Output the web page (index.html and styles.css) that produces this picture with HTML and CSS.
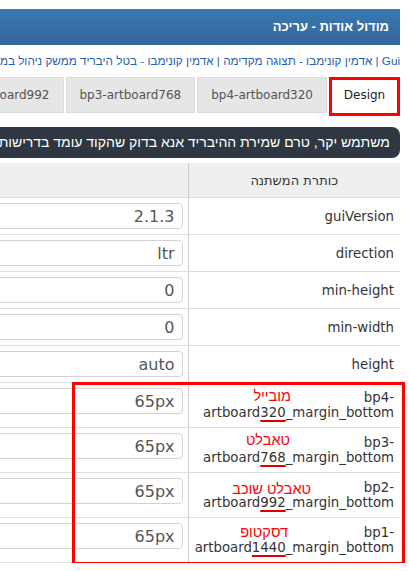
FILE: index.html
```html
<!DOCTYPE html>
<html lang="he" dir="rtl">
<head>
<meta charset="utf-8">
<title>מודול אודות - עריכה</title>
<link rel="stylesheet" href="styles.css">
</head>
<body>
<div class="page">
  <header class="titlebar"><h1 class="title">מודול אודות - עריכה</h1></header>
  <nav class="crumbs"><a class="crumb">Gui</a> | <a class="crumb">אדמין קונימבו - תצוגה מקדימה</a> | <a class="crumb">אדמין קונימבו - בטל היבריד ממשק ניהול במסך מלא</a></nav>
  <div class="tabs">
    <div class="tab tab-active">Design</div>
    <div class="tab">bp4-artboard320</div>
    <div class="tab">bp3-artboard768</div>
    <div class="tab">bp2-artboard992</div>
    <div class="tab">bp1-artboard1440</div>
  </div>
  <div class="alert">משתמש יקר, טרם שמירת ההיבריד אנא בדוק שהקוד עומד בדרישות הבאות</div>
  <div class="table-wrap">
    <table class="vars">
      <colgroup><col class="col-label"><col class="col-value"></colgroup>
      <thead>
        <tr><th class="th-label">כותרת המשתנה</th><th class="th-value"></th></tr>
      </thead>
      <tbody>
        <tr><td class="label">guiVersion</td><td class="value"><input class="field" value="2.1.3"></td></tr>
        <tr><td class="label">direction</td><td class="value"><input class="field" value="ltr"></td></tr>
        <tr><td class="label">min-height</td><td class="value"><input class="field" value="0"></td></tr>
        <tr><td class="label">min-width</td><td class="value"><input class="field" value="0"></td></tr>
        <tr><td class="label">height</td><td class="value"><input class="field" value="auto"></td></tr>
        <tr class="bp-row"><td class="label">bp4-artboard<span class="mark">320</span>_margin_bottom<span class="note note-bp4">מובייל</span></td><td class="value"><input class="field" value="65px"></td></tr>
        <tr class="bp-row"><td class="label">bp3-artboard<span class="mark">768</span>_margin_bottom<span class="note note-bp3">טאבלט</span></td><td class="value"><input class="field" value="65px"></td></tr>
        <tr class="bp-row"><td class="label">bp2-artboard<span class="mark">992</span>_margin_bottom<span class="note note-bp2">טאבלט שוכב</span></td><td class="value"><input class="field" value="65px"></td></tr>
        <tr class="bp-row"><td class="label">bp1-artboard<span class="mark">1440</span>_margin_bottom<span class="note note-bp1">דסקטופ</span></td><td class="value"><input class="field" value="65px"></td></tr>
      </tbody>
    </table>
    <div class="highlight-box"></div>
  </div>
</div>
</body>
</html>
```

FILE: styles.css
```css
html, body {
  margin: 0;
  padding: 0;
  background: #ffffff;
  overflow: hidden;
}

body {
  font-family: "Liberation Sans", Arial, sans-serif;
  color: #333333;
}

.page {
  width: 900px;
  margin: 9px 9px 0 0;
}

.titlebar {
  height: 36px;
  display: flex;
  align-items: center;
  padding: 0 11px;
  background: linear-gradient(#3b79b3, #33669a);
}

.title {
  margin: 0;
  font-size: 13px;
  font-weight: bold;
  color: #ffffff;
  line-height: 18px;
}

.crumbs {
  margin-top: 7px;
  height: 18px;
  line-height: 18px;
  font-size: 11.7px;
  color: #1f5fae;
  white-space: nowrap;
}

.crumb {
  color: #1f5fae;
  text-decoration: none;
}

.tabs {
  display: flex;
  align-items: flex-start;
  gap: 2px;
  margin-top: 7px;
  height: 39px;
}

.tab {
  box-sizing: border-box;
  height: 36px;
  padding: 0 13px;
  display: flex;
  align-items: center;
  background: #e6e6e6;
  border: 1px solid #dadada;
  font-family: "DejaVu Sans", Verdana, sans-serif;
  font-size: 12px;
  color: #555555;
  white-space: nowrap;
  flex: none;
}

.tab-active {
  height: 39px;
  width: 71px;
  padding: 0 0 3px;
  justify-content: center;
  background: #ffffff;
  border: 3px solid #ff0000;
  color: #222222;
}

.alert {
  margin-top: 11px;
  height: 31px;
  line-height: 31px;
  padding: 0 10px;
  background: #2e3742;
  color: #ffffff;
  font-size: 14px;
  border-radius: 8px;
  white-space: nowrap;
  overflow: hidden;
}

.table-wrap {
  position: relative;
  margin-top: 5px;
}

.vars {
  width: 100%;
  table-layout: fixed;
  border-collapse: collapse;
  font-family: "DejaVu Sans", Verdana, sans-serif;
}

.col-label {
  width: 212px;
}

.th-label,
.th-value {
  height: 34px;
  padding: 0;
  background: #efefef;
  border-bottom: 1px solid #dddddd;
  font-weight: normal;
}

.th-label {
  border-left: 1px solid #cccccc;
  text-align: center;
  font-size: 13px;
  color: #333333;
}

.vars td {
  border-bottom: 1px solid #dddddd;
}

.label {
  position: relative;
  padding: 7px 6px 7px 4px;
  border-left: 1px solid #cccccc;
  vertical-align: middle;
  text-align: right;
  font-size: 13.3px;
  line-height: 15px;
  color: #333333;
}

.value {
  padding: 5px 5px 5px 5px;
  vertical-align: top;
}

.field {
  display: block;
  box-sizing: border-box;
  width: 100%;
  height: 26px;
  margin: 0;
  padding: 0 7px;
  border: 1px solid #d2d2d2;
  border-radius: 4px;
  background: #ffffff;
  font-family: "DejaVu Sans", Verdana, sans-serif;
  font-size: 16px;
  color: #555555;
  text-align: right;
  direction: rtl;
}

.mark {
  text-decoration: underline;
  text-decoration-color: #e00000;
  text-decoration-thickness: 2px;
  text-underline-offset: 3px;
}

.note {
  position: absolute;
  font-family: "Liberation Sans", Arial, sans-serif;
  font-size: 14.5px;
  line-height: 16px;
  color: #ff0000;
  white-space: nowrap;
}

.note-bp4 { top: 5px; right: 109px; }
.note-bp3 { top: 4px; right: 110px; }
.note-bp2 { top: 8px; right: 89px; }
.note-bp1 { top: 6px; right: 112px; }

.highlight-box {
  position: absolute;
  top: 219px;
  right: -5px;
  width: 333px;
  height: 183px;
  box-sizing: border-box;
  border: 3px solid #ff0000;
  pointer-events: none;
}
```
